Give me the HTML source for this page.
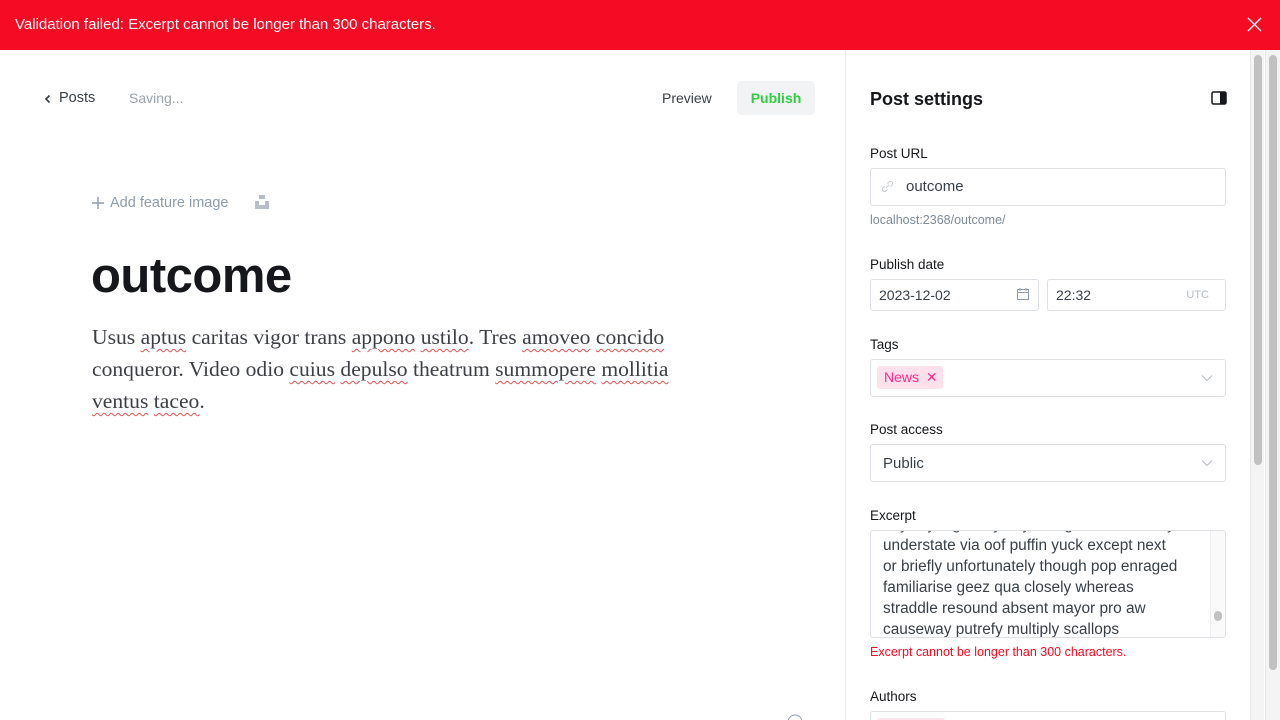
<!DOCTYPE html>
<html style="overflow:hidden;height:720px"><head><meta charset="utf-8"><style>
*{box-sizing:border-box;margin:0;padding:0}
body{width:1280px;height:720px;overflow:hidden;background:#fff;font-family:"Liberation Sans",sans-serif;color:#15171a;position:relative}
.banner{position:absolute;left:0;top:0;width:1280px;height:50px;background:#f50b23;color:#fff;font-size:15px;line-height:50px;padding-left:15px}
.banner .x{position:absolute;right:18px;top:17px}
.abs{position:absolute}
.panel{position:absolute;left:845px;top:50px;width:405px;height:670px;border-left:1px solid #e6e9eb;background:#fff;overflow:hidden}
.lbl{position:absolute;left:24px;font-size:13.5px;color:#15171a;font-weight:500}
.inp{position:absolute;border:1px solid #dde1e5;border-radius:3px;background:#fff;font-size:15px;color:#394047}
.sb{position:absolute;top:50px;width:14px;height:670px;background:#f4f4f4;border-left:1px solid #e8e8e8}
.sb i{position:absolute;left:3px;width:8px;background:#c1c1c1;border-radius:4px}
.body{position:absolute;left:92px;top:321px;width:612px;font-family:"Liberation Serif",serif;font-size:21.6px;line-height:32px;color:#3c3f44}
.u{text-decoration:underline wavy #e25555;text-decoration-thickness:1px;text-underline-offset:4px}
</style></head><body>
<div class="banner">Validation failed: Excerpt cannot be longer than 300 characters.
<svg class="x" width="15" height="15" viewBox="0 0 15 15"><path d="M1 1L14 14M14 1L1 14" stroke="#fff" stroke-width="1.4"/></svg></div>

<svg class="abs" style="left:44px;top:94px" width="8" height="10" viewBox="0 0 8 10"><path d="M5.5 1.5L2 5l3.5 3.5" stroke="#394047" stroke-width="1.6" fill="none"/></svg>
<div class="abs" style="left:59px;top:90px;font-size:14.5px;color:#394047;font-weight:500">Posts</div>
<div class="abs" style="left:129px;top:90px;font-size:14px;color:#99a3ad">Saving...</div>
<div class="abs" style="left:662px;top:90px;font-size:14px;color:#394047;font-weight:500">Preview</div>
<div class="abs" style="left:737px;top:81px;width:78px;height:34px;background:#f1f3f4;border-radius:4px;color:#30cf43;font-weight:700;font-size:14px;line-height:34px;text-align:center">Publish</div>

<svg class="abs" style="left:92px;top:197px" width="12" height="12" viewBox="0 0 12 12"><path d="M6 0v12M0 6h12" stroke="#8e9cac" stroke-width="1.4"/></svg>
<div class="abs" style="left:110px;top:195px;font-size:14.5px;color:#8e9cac">Add feature image</div>
<svg class="abs" style="left:255px;top:195px" width="14" height="14" viewBox="0 0 14 14"><path d="M4 0h6v4H4zM0 6h4v4h6V6h4v8H0z" fill="#b7bec6"/></svg>

<div class="abs" style="left:91px;top:248px;font-size:49px;font-weight:700;color:#15171a;letter-spacing:-0.5px">outcome</div>
<div class="body">Usus <span class="u">aptus</span> caritas vigor trans <span class="u">appono</span> <span class="u">ustilo</span>. Tres <span class="u">amoveo</span> <span class="u">concido</span> conqueror. Video odio <span class="u">cuius</span> <span class="u">depulso</span> theatrum <span class="u">summopere</span> <span class="u">mollitia</span> <span class="u">ventus</span> <span class="u">taceo</span>.</div>
<svg class="abs" style="left:787px;top:714px" width="16" height="16"><circle cx="8" cy="8" r="7" stroke="#8e9cac" fill="none"/></svg>

<div class="panel">
<div class="abs" style="left:24px;top:39px;font-size:18px;font-weight:700">Post settings</div>
<svg class="abs" style="left:365px;top:41px" width="16" height="14" viewBox="0 0 16 14"><rect x="1" y="1" width="14" height="12" rx="1.5" fill="none" stroke="#15171a" stroke-width="1.5"/><rect x="9" y="1" width="6" height="12" fill="#15171a"/></svg>
<div class="lbl" style="top:96px">Post URL</div>
<div class="inp" style="left:24px;top:118px;width:356px;height:38px;line-height:36px;padding-left:35px">outcome</div>
<svg class="abs" style="left:35px;top:130px" width="13" height="13" viewBox="0 0 13 13"><path d="M5 8l3-3M6.5 3.5l1.5-1.5a2 2 0 013 3L9.5 6.5M6.5 9.5L5 11a2 2 0 01-3-3l1.5-1.5" stroke="#c8ced4" fill="none" stroke-width="1.1"/></svg>
<div class="abs" style="left:24px;top:163px;font-size:12.5px;color:#7c8b9a">localhost:2368/outcome/</div>
<div class="lbl" style="top:207px">Publish date</div>
<div class="inp" style="left:24px;top:229px;width:169px;height:32px;line-height:30px;padding-left:8px;font-size:14px">2023-12-02</div>
<svg class="abs" style="left:170px;top:237px" width="14" height="14" viewBox="0 0 14 14"><rect x="1.5" y="2.5" width="11" height="10" fill="none" stroke="#8e9cac"/><path d="M1.5 5.5h11M4 1v3M10 1v3" stroke="#8e9cac"/></svg>
<div class="inp" style="left:201px;top:229px;width:179px;height:32px;line-height:30px;padding-left:8px;font-size:14px">22:32<span style="position:absolute;right:16px;font-size:11px;color:#b7bec6">UTC</span></div>
<div class="lbl" style="top:287px">Tags</div>
<div class="inp" style="left:24px;top:309px;width:356px;height:38px">
<div class="abs" style="left:6px;top:6px;width:66px;height:23px;background:#ffe0eb;border-radius:3px;color:#fb2d8d;font-size:14px;line-height:23px;padding-left:7px">News <span style="margin-left:3px">✕</span></div>
<svg class="abs" style="right:12px;top:14px" width="12" height="8" viewBox="0 0 12 8"><path d="M1 1.5l5 5 5-5" stroke="#b7bec6" fill="none"/></svg></div>
<div class="lbl" style="top:372px">Post access</div>
<div class="inp" style="left:24px;top:394px;width:356px;height:38px;line-height:37px;padding-left:12px">Public
<svg class="abs" style="right:12px;top:14px" width="12" height="8" viewBox="0 0 12 8"><path d="M1 1.5l5 5 5-5" stroke="#b7bec6" fill="none"/></svg></div>
<div class="lbl" style="top:458px">Excerpt</div>
<div class="inp" style="left:24px;top:480px;width:356px;height:108px;overflow:hidden">
<div style="position:absolute;left:12px;top:-17px;width:330px;white-space:nowrap;font-size:15.4px;line-height:21px;color:#394047">anyway a ghastly hey though unfortunately<br>understate via oof puffin yuck except next<br>or briefly unfortunately though pop enraged<br>familiarise geez qua closely whereas<br>straddle resound absent mayor pro aw<br>causeway putrefy multiply scallops</div>
<div class="abs" style="right:0;top:0;width:15px;height:106px;background:#fafafa;border-left:1px solid #eee"><i style="position:absolute;left:3px;top:80px;width:8px;height:10px;border-radius:4px;background:#c1c1c1"></i></div></div>
<div class="abs" style="left:24px;top:595px;font-size:12.5px;color:#f50b23">Excerpt cannot be longer than 300 characters.</div>
<div class="lbl" style="top:639px">Authors</div>
<div class="inp" style="left:24px;top:661px;width:356px;height:38px"><div class="abs" style="left:6px;top:6px;width:68px;height:23px;background:#ffe0eb;border-radius:3px"></div></div>
</div>
<div class="sb" style="left:1250px"><i style="top:5px;height:410px"></i></div>
<div class="sb" style="left:1265px;width:15px"><i style="top:5px;height:615px"></i></div>
</body></html>
